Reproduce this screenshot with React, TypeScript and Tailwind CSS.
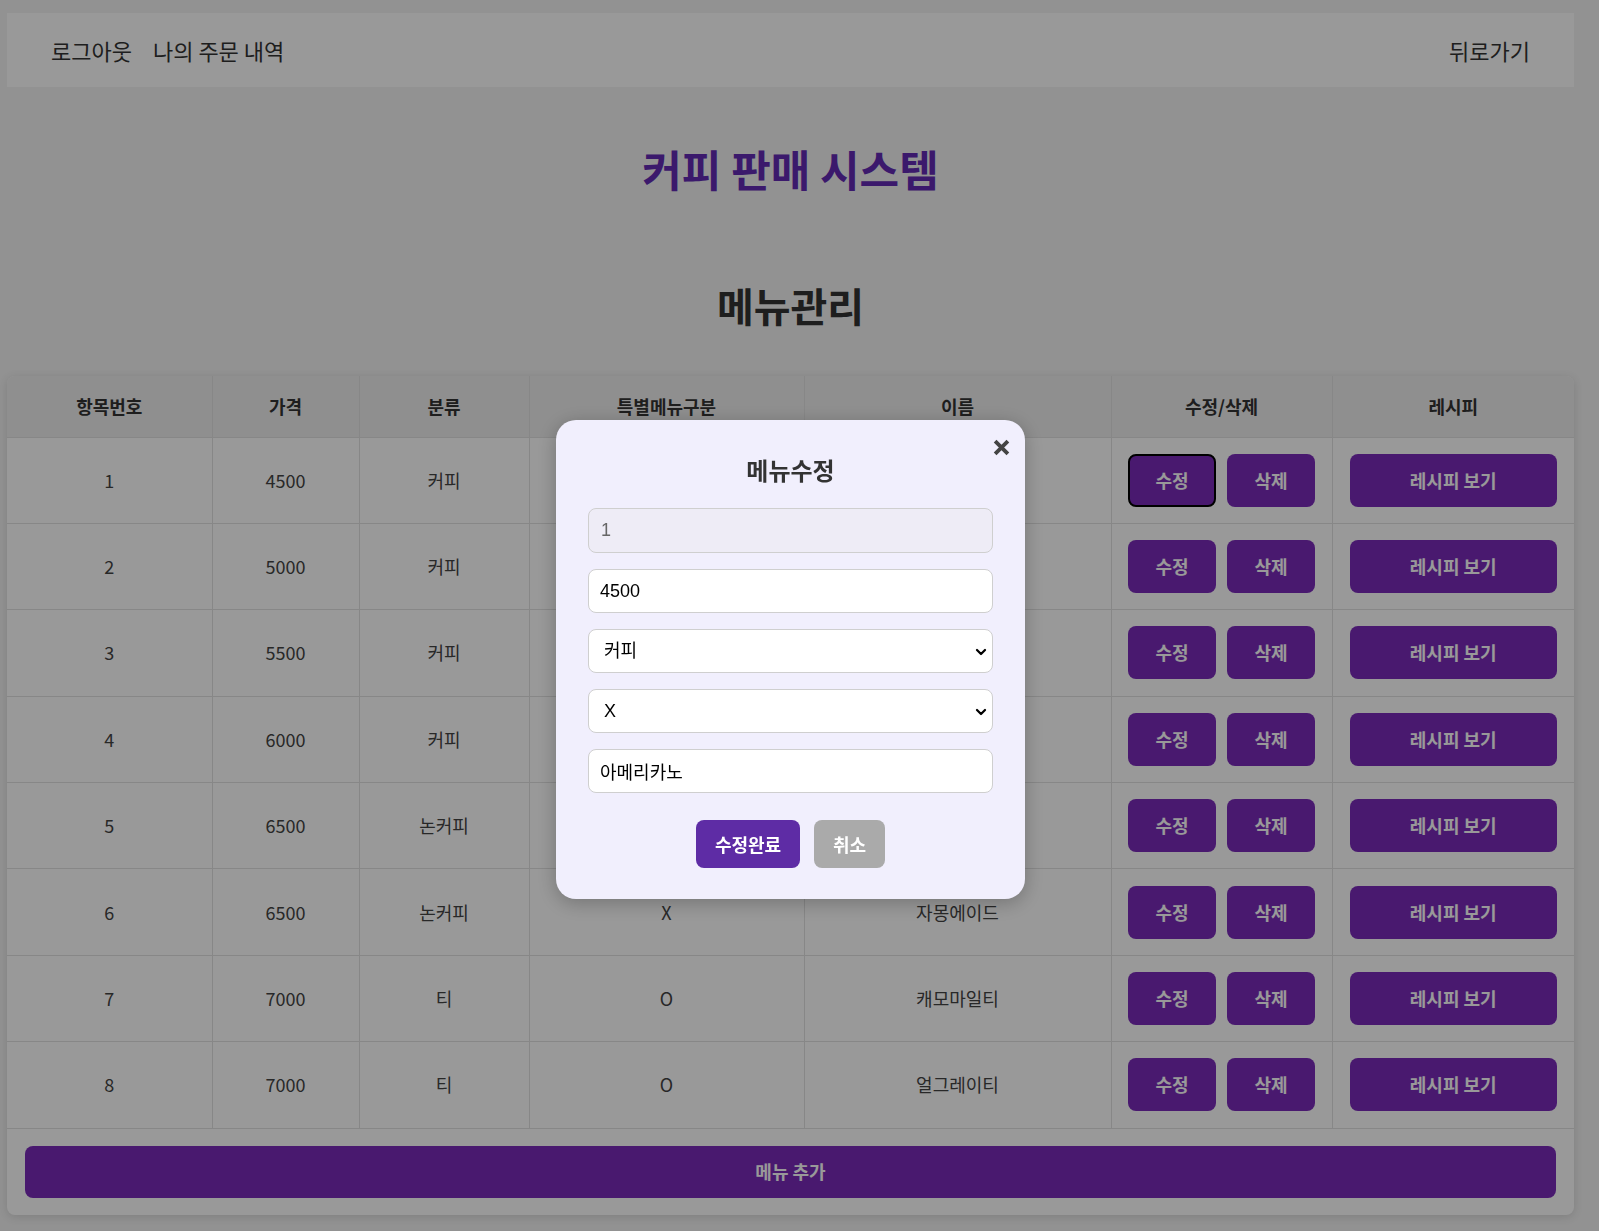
import { ChevronDown } from "lucide-react";

const rows = [
  { id: 1, price: 4500, type: "커피", special: "X", name: "아메리카노" },
  { id: 2, price: 5000, type: "커피", special: "X", name: "카페라떼" },
  { id: 3, price: 5500, type: "커피", special: "X", name: "바닐라라떼" },
  { id: 4, price: 6000, type: "커피", special: "O", name: "카라멜마끼아또" },
  { id: 5, price: 6500, type: "논커피", special: "X", name: "초코라떼" },
  { id: 6, price: 6500, type: "논커피", special: "X", name: "자몽에이드" },
  { id: 7, price: 7000, type: "티", special: "O", name: "캐모마일티" },
  { id: 8, price: 7000, type: "티", special: "O", name: "얼그레이티" },
];

const headers = ["항목번호", "가격", "분류", "특별메뉴구분", "이름", "수정/삭제", "레시피"];
const widths = [205, 147, 170, 275, 307, 221, 242];

const font = { fontFamily: '"Noto Sans CJK KR", "Noto Sans", sans-serif' };
const inputFont = { fontFamily: '"Liberation Sans", "Noto Sans CJK KR", sans-serif' };

export default function App() {
  return (
    <div className="min-h-screen bg-[#f3f3f3]" style={font}>
      <div className="pl-[7px] pr-[25px] pt-[13px] pb-[18px]">
        <nav className="h-[74px] bg-white flex items-center justify-between px-[44px] text-[22px] text-[#333]">
          <div className="flex gap-[21px]">
            <span>로그아웃</span>
            <span>나의 주문 내역</span>
          </div>
          <span>뒤로가기</span>
        </nav>

        <h1 className="mt-[57px] text-center text-[43px] leading-[48px] font-bold text-[#632bb4]">
          커피 판매 시스템
        </h1>
        <h2 className="mt-[90px] text-center text-[40px] leading-[46px] font-bold text-[#333]">
          메뉴관리
        </h2>

        <div className="mt-[48px] bg-white rounded-lg shadow-[0_2px_10px_rgba(0,0,0,0.12)] overflow-hidden">
          <table className="w-full table-fixed border-collapse">
            <colgroup>
              {widths.map((w, i) => (
                <col key={i} style={{ width: w }} />
              ))}
            </colgroup>
            <thead>
              <tr className="bg-[#eeeeee]">
                {headers.map((h) => (
                  <th
                    key={h}
                    className="h-[61px] border-r border-b border-[#e2e2e2] last:border-r-0 text-[18px] font-bold text-[#333]"
                  >
                    {h}
                  </th>
                ))}
              </tr>
            </thead>
            <tbody>
              {rows.map((r) => (
                <tr key={r.id} className="text-[18px] text-[#444]">
                  <td className="h-[86.4px] border-r border-b border-[#e2e2e2] text-center">{r.id}</td>
                  <td className="border-r border-b border-[#e2e2e2] text-center">{r.price}</td>
                  <td className="border-r border-b border-[#e2e2e2] text-center">{r.type}</td>
                  <td className="border-r border-b border-[#e2e2e2] text-center">{r.special}</td>
                  <td className="border-r border-b border-[#e2e2e2] text-center">{r.name}</td>
                  <td className="border-r border-b border-[#e2e2e2]">
                    <div className="flex justify-center gap-[11px]">
                      <button
                        className={
                          r.id === 1
                            ? "w-[88px] h-[53px] rounded-lg bg-[#7b2bba] text-white text-[18px] font-bold border-2 border-black"
                            : "w-[88px] h-[53px] rounded-lg bg-[#7b2bba] text-white text-[18px] font-bold"
                        }
                      >
                        수정
                      </button>
                      <button className="w-[88px] h-[53px] rounded-lg bg-[#7b2bba] text-white text-[18px] font-bold">
                        삭제
                      </button>
                    </div>
                  </td>
                  <td className="border-b border-[#e2e2e2] px-[17px]">
                    <button className="w-full h-[53px] rounded-lg bg-[#7b2bba] text-white text-[18px] font-bold">
                      레시피 보기
                    </button>
                  </td>
                </tr>
              ))}
            </tbody>
          </table>
          <div className="px-[18px] py-[17px]">
            <button className="w-full h-[52px] rounded-lg bg-[#7b2bba] text-white text-[18px] font-bold">
              메뉴 추가
            </button>
          </div>
        </div>
      </div>

      <div className="fixed inset-0 bg-black/40 flex justify-center items-start pt-[420px] pl-[7px] pr-[25px]">
        <div className="relative w-[469px] bg-[#f1effd] rounded-[20px] shadow-[0_4px_20px_rgba(0,0,0,0.25)] px-8 pt-[33px] pb-[31px]">
          <button className="absolute top-[15px] right-[12px] w-[24px] h-[24px] flex items-center justify-center">
            <svg width="17" height="17" viewBox="0 0 16 16">
              <path d="M2 2 L14 14 M14 2 L2 14" stroke="#444" strokeWidth="3.6" strokeLinecap="butt" />
            </svg>
          </button>
          <h3 className="text-center text-[24px] leading-[33px] font-bold text-[#333]">메뉴수정</h3>
          <div className="mt-[22px] flex flex-col gap-[16px]" style={inputFont}>
            <input
              disabled
              value="1"
              readOnly
              className="h-[45px] w-full rounded-lg border border-[#cfcfcf] bg-[#eeecf6] px-[12px] text-[18px] text-[#666]"
            />
            <input
              value="4500"
              readOnly
              className="h-[44px] w-full rounded-lg border border-[#cfcfcf] bg-white px-[11px] text-[18px] text-black"
            />
            <div className="relative">
              <select className="h-[44px] w-full appearance-none rounded-lg border border-[#cfcfcf] bg-white pl-[15px] text-[18px] text-black">
                <option>커피</option>
              </select>
              <ChevronDown className="absolute right-[4px] top-[15px] w-[16px] h-[16px] text-black pointer-events-none" strokeWidth={3.4} />
            </div>
            <div className="relative">
              <select className="h-[44px] w-full appearance-none rounded-lg border border-[#cfcfcf] bg-white pl-[15px] text-[18px] text-black">
                <option>X</option>
              </select>
              <ChevronDown className="absolute right-[4px] top-[15px] w-[16px] h-[16px] text-black pointer-events-none" strokeWidth={3.4} />
            </div>
            <input
              value="아메리카노"
              readOnly
              className="h-[44px] w-full rounded-lg border border-[#cfcfcf] bg-white px-[11px] text-[18px] text-black"
            />
          </div>
          <div className="mt-[27px] flex justify-center gap-[14px]">
            <button className="w-[104px] h-[48px] rounded-lg bg-[#5e2ca5] text-white text-[18px] font-bold">
              수정완료
            </button>
            <button className="w-[71px] h-[48px] rounded-lg bg-[#aaaaaa] text-white text-[18px] font-bold">
              취소
            </button>
          </div>
        </div>
      </div>
    </div>
  );
}
